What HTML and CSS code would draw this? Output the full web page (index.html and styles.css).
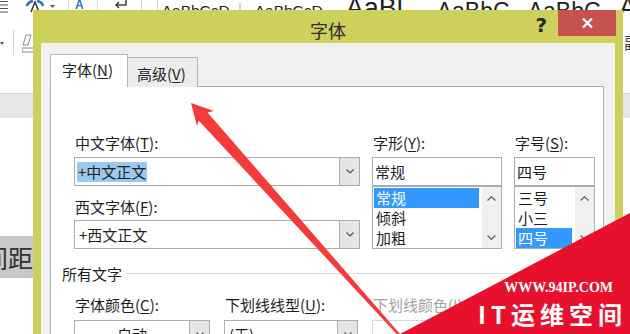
FILE: index.html
```html
<!DOCTYPE html>
<html lang="zh-CN">
  <head>
    <meta charset="UTF-8" />
    <title>字体</title>
    <link rel="stylesheet" href="styles.css">
  </head>
  <body>
    <!-- word window behind the dialog -->
    <div class="word">
      <div class="ribbon">
        <div class="ribbon-row row-top">
          <svg class="list-ico" width="8" height="14" viewBox="0 0 8 14"><path d="M0 1.5H8M0 5H8M0 8.5H8M0 12H8" stroke="#555" stroke-width="1"/></svg>
          <svg class="effect-ico" width="20" height="12" viewBox="0 0 20 12"><path d="M2 6a8 6 0 0 1 6-5M18 6a8 6 0 0 0-6-5" fill="none" stroke="#2f6fbf" stroke-width="2.5"/><path d="M6 12L10 2L14 12" fill="none" stroke="#333" stroke-width="1.5"/></svg>
          <svg class="drop-tri" width="5" height="3" viewBox="0 0 5 3"><path d="M0 0H5L2.5 3Z" fill="#555"/></svg>
          <span class="rsep"></span>
          <span class="blue-a">A</span>
          <span class="rsep"></span>
          <svg class="return-ico" width="14" height="9" viewBox="0 0 14 9"><path d="M12 0V5H2M5 2L2 5L5 8" fill="none" stroke="#444" stroke-width="1.6"/></svg>
          <span class="rsep"></span>
          <div class="gallery">
            <span class="style-item s-small first">AaBbCcD</span>
            <span class="style-item s-small">AaBbCcD</span>
            <span class="style-item s-big">AaBl</span>
            <span class="style-item s-mid">AaBbC</span>
            <span class="style-item s-mid">AaBbC</span>
            <span class="style-item s-big">A</span>
          </div>
        </div>
        <div class="ribbon-row row-second">
          <svg class="small-tri" width="4" height="3" viewBox="0 0 4 3"><path d="M0 0H4L2 3Z" fill="#555"/></svg>
          <span class="rsep tall"></span>
          <svg class="eraser-ico" width="12" height="20" viewBox="0 0 12 20"><path d="M4 2L9 2L6 12L1 12Z" fill="none" stroke="#8a8a8a" stroke-width="1"/><path d="M0 15H12V19H0Z" fill="none" stroke="#8a8a8a" stroke-width="1"/></svg>
          <span class="side-style">副标题</span>
        </div>
      </div>
      <div class="ribbon-foot"></div>
      <div class="doc">
        <p class="doc-line"><span class="hl">间距离</span></p>
      </div>
    </div>

    <!-- font dialog -->
    <div class="dialog">
      <div class="titlebar">
        <div class="title">字体</div>
        <div class="controls">
          <span class="help">?</span>
          <span class="close">
            <svg width="11" height="10" viewBox="0 0 11 10"><path d="M1 0.5L10 9.5M10 0.5L1 9.5" stroke="#fff" stroke-width="2.2"/></svg>
          </span>
        </div>
      </div>

      <div class="client">
        <div class="tabs">
          <div class="tab active">字体(<u>N</u>)</div>
          <div class="tab">高级(<u>V</u>)</div>
        </div>

        <div class="panel">
          <div class="font-grid">
            <div class="col">
              <div class="label">中文字体(<u>T</u>):</div>
              <div class="combo">
                <span class="combo-text"><span class="sel-text">+中文正文</span></span>
                <span class="drop"><svg width="8" height="5" viewBox="0 0 8 5"><path d="M0.5 0.5L4 4L7.5 0.5" fill="none" stroke="#555" stroke-width="1.2"/></svg></span>
              </div>
              <div class="label second">西文字体(<u>F</u>):</div>
              <div class="combo tight">
                <span class="combo-text pad">+西文正文</span>
                <span class="drop"><svg width="8" height="5" viewBox="0 0 8 5"><path d="M0.5 0.5L4 4L7.5 0.5" fill="none" stroke="#555" stroke-width="1.2"/></svg></span>
              </div>
            </div>

            <div class="col">
              <div class="label">字形(<u>Y</u>):</div>
              <div class="textbox">常规</div>
              <div class="listbox">
                <ul class="items">
                  <li class="sel">常规</li>
                  <li>倾斜</li>
                  <li>加粗</li>
                </ul>
                <div class="scroll">
                  <svg width="9" height="5" viewBox="0 0 9 5"><path d="M0.5 4.5L4.5 0.8L8.5 4.5" fill="none" stroke="#606060" stroke-width="1.3"/></svg>
                  <svg width="9" height="5" viewBox="0 0 9 5"><path d="M0.5 0.5L4.5 4.2L8.5 0.5" fill="none" stroke="#606060" stroke-width="1.3"/></svg>
                </div>
              </div>
            </div>

            <div class="col">
              <div class="label">字号(<u>S</u>):</div>
              <div class="textbox">四号</div>
              <div class="listbox">
                <ul class="items">
                  <li>三号</li>
                  <li>小三</li>
                  <li class="sel">四号</li>
                </ul>
                <div class="scroll">
                  <svg width="9" height="5" viewBox="0 0 9 5"><path d="M0.5 4.5L4.5 0.8L8.5 4.5" fill="none" stroke="#606060" stroke-width="1.3"/></svg>
                  <svg width="9" height="5" viewBox="0 0 9 5"><path d="M0.5 0.5L4.5 4.2L8.5 0.5" fill="none" stroke="#606060" stroke-width="1.3"/></svg>
                </div>
              </div>
            </div>
          </div>

          <div class="group-head">所有文字</div>

          <div class="effect-grid">
            <div class="label">字体颜色(<u>C</u>):</div>
            <div class="label">下划线线型(<u>U</u>):</div>
            <div class="label disabled">下划线颜色(<u>I</u>):</div>
            <div class="combo">
              <span class="combo-text center">自动</span>
              <span class="drop"><svg width="8" height="5" viewBox="0 0 8 5"><path d="M0.5 0.5L4 4L7.5 0.5" fill="none" stroke="#555" stroke-width="1.2"/></svg></span>
            </div>
            <div class="combo">
              <span class="combo-text pad">(无)</span>
              <span class="drop"><svg width="8" height="5" viewBox="0 0 8 5"><path d="M0.5 0.5L4 4L7.5 0.5" fill="none" stroke="#555" stroke-width="1.2"/></svg></span>
            </div>
            <div class="combo off"></div>
          </div>
        </div>
      </div>
    </div>

    <!-- red arrow pointing at the tab -->
    <svg class="arrow" width="630" height="334" viewBox="0 0 630 334">
      <polygon points="191,103 214,111 207.5,112.4 410.7,346.3 409.3,347.7 198.6,120.4 197,126" fill="#f33b3b"/>
    </svg>

    <!-- site watermark -->
    <div class="watermark">
      <div class="wm-url">WWW.94IP.COM</div>
      <div class="wm-name">IT运维空间</div>
    </div>
  </body>
</html>
```

FILE: styles.css
```css
* {
  box-sizing: border-box;
}

body {
  margin: 0;
  width: 630px;
  height: 334px;
  overflow: hidden;
  position: relative;
  background: #fff;
  font-family: "Noto Sans CJK SC", "Noto Sans", sans-serif;
  font-size: 15px;
  color: #1e1e1e;
}

u {
  text-decoration-thickness: 1px;
  text-underline-offset: 2px;
}

/* word background */
.word {
  display: flex;
  flex-direction: column;
  height: 334px;
}

.ribbon {
  height: 93px;
  background: #fff;
}

.ribbon-row {
  display: flex;
  align-items: flex-start;
}

.ribbon-row > *,
.gallery > * {
  flex-shrink: 0;
}

.row-top {
  height: 16px;
}

.effect-ico {
  margin-left: 17px;
}

.drop-tri {
  margin: 5px 0 0 5px;
}

.rsep {
  width: 1px;
  height: 16px;
  background: #d6d6d6;
  margin-left: 13px;
}

.blue-a {
  margin-left: 6px;
  font: bold 12px/10px "Liberation Sans", sans-serif;
  color: #2f6fbf;
}

.return-ico {
  margin-left: 16px;
}

.gallery {
  display: flex;
  align-items: flex-start;
  margin-left: 15px;
  border-left: 1px solid #d6d6d6;
  font-family: "Liberation Sans", sans-serif;
  color: #222;
}

.style-item {
  width: 91px;
  padding-left: 5px;
  line-height: 1;
  white-space: nowrap;
}

.style-item.first {
  width: 83px;
  padding-left: 4px;
  border-right: 2px solid #d6d6d6;
  margin-right: 9px;
}

.s-small {
  font-size: 15.5px;
  margin-top: 3px;
}

.s-mid {
  font-size: 23px;
  margin-top: 0;
}

.s-big {
  font-size: 27px;
  margin-top: -5px;
}

.row-second {
  margin-top: 14px;
  height: 25px;
}

.small-tri {
  margin-top: 12px;
}

.rsep.tall {
  height: 25px;
  margin-left: 9px;
}

.eraser-ico {
  margin: 3px 0 0 8px;
}

.side-style {
  margin-left: auto;
  margin-right: -42px;
  margin-top: 2px;
  font-size: 16px;
  line-height: 20px;
  color: #444;
}

.ribbon-foot {
  height: 25px;
  background: #e6e6e6;
  border-top: 1px solid #d8d8d8;
}

.doc {
  flex: 1;
  background: #fff;
  padding-top: 118px;
}

.doc-line {
  margin: 0 0 0 -17px;
  font-size: 25px;
  line-height: 42px;
  color: #333;
  white-space: nowrap;
}

.hl {
  display: inline-block;
  background: #c8c8c8;
  padding-right: 10px;
}

/* dialog window */
.dialog {
  position: absolute;
  left: 33px;
  top: 10px;
  width: 590px;
  height: 340px;
  background: #cdd15c;
  padding: 0 8px;
  display: flex;
  flex-direction: column;
}

.titlebar {
  height: 37px;
  display: grid;
  grid-template-columns: 1fr auto 1fr;
  align-items: start;
}

.title {
  grid-column: 2;
  font-size: 18px;
  line-height: 20px;
  padding-top: 10px;
  color: #2e2e2e;
}

.controls {
  grid-column: 3;
  justify-self: end;
  display: flex;
  align-items: flex-start;
  margin-right: -1px;
}

.help {
  font: bold 20px/20px "DejaVu Sans", sans-serif;
  color: #262626;
  margin: 5px 11px 0 0;
}

.close {
  width: 58px;
  height: 26px;
  background: #c75050;
  display: flex;
  align-items: center;
  justify-content: center;
}

.client {
  flex: 1;
  background: #f0f0f0;
  padding: 11px 11px 0 9px;
  display: flex;
  flex-direction: column;
}

.tabs {
  display: flex;
  align-items: flex-end;
  height: 33px;
  margin-bottom: -1px;
  position: relative;
  z-index: 1;
}

.tab {
  width: 70px;
  height: 30px;
  padding: 6px 0 0 9px;
  line-height: 20px;
  background: #ececec;
  border-top: 1px solid #b4b4b4;
  border-right: 1px solid #b4b4b4;
  color: #222;
}

.tab.active {
  width: 78px;
  height: 33px;
  padding: 5px 0 0 11px;
  background: #fff;
  border: 1px solid #b4b4b4;
  border-bottom: none;
}

.panel {
  flex: 1;
  background: #fff;
  border: 1px solid #adadad;
  padding: 47px 0 0 23px;
}

.font-grid {
  display: grid;
  grid-template-columns: 286px 130px 81px;
  column-gap: 12px;
}

.label {
  line-height: 18px;
  white-space: nowrap;
  margin-bottom: 5px;
  padding-left: 1px;
}

.label.second {
  margin: 12px 0 4px;
}

.label.disabled {
  color: #a3a3a3;
}

.combo {
  height: 29px;
  border: 1px solid #acacac;
  background: #fff;
  display: flex;
}

.combo-text {
  flex: 1;
  display: flex;
  align-items: center;
  padding-left: 2px;
  white-space: nowrap;
}

.combo-text.pad {
  padding-left: 4px;
}

.combo-text.center {
  justify-content: center;
  padding-left: 0;
}

.sel-text {
  display: inline-block;
  line-height: 20px;
  padding: 0 1px;
  background: #99c9ef;
}

.drop {
  width: 20px;
  background: #e5e5e5;
  border-left: 1px solid #acacac;
  display: flex;
  align-items: center;
  justify-content: center;
}

.combo.off {
  border-color: #d9d9d9;
}

.textbox {
  height: 29px;
  border: 1px solid #acacac;
  padding-left: 2px;
  line-height: 27px;
}

.listbox {
  height: 63px;
  border: 1px solid #acacac;
  display: flex;
  background: #fff;
}

.items {
  flex: 1;
  list-style: none;
  margin: 0;
  padding: 1px 3px 0 1px;
}

.items li {
  height: 20px;
  line-height: 20px;
  padding-left: 2px;
}

.items li.sel {
  background: #3399ff;
  color: #fff;
}

.scroll {
  width: 19px;
  background: #f0f0f0;
  display: flex;
  flex-direction: column;
  align-items: center;
  justify-content: space-between;
  padding: 9px 0 8px;
}

.group-head {
  display: flex;
  align-items: center;
  margin: 15px 11px 0 -12px;
  line-height: 19px;
}

.group-head::after {
  content: "";
  flex: 1;
  height: 1px;
  background: #dcdcdc;
  margin-left: 4px;
}

.effect-grid {
  display: grid;
  grid-template-columns: 136px 134px 1fr;
  column-gap: 14px;
  margin: 13px 11px 0 0;
}

.effect-grid .label {
  margin-bottom: 6px;
}

/* overlays */
.arrow {
  position: absolute;
  left: 0;
  top: 0;
  pointer-events: none;
}

.watermark {
  position: absolute;
  right: 0;
  bottom: 0;
  width: 230px;
  height: 121px;
  background: #e8112d;
  clip-path: polygon(100% 0, 100% 100%, 0 100%);
  display: flex;
  flex-direction: column;
  align-items: flex-end;
  justify-content: flex-end;
  padding: 0 3px 6px 0;
  color: #fff;
}

.wm-url {
  font: bold 14px/16px "Liberation Serif", serif;
  margin: 0 14px 4px 0;
}

.wm-name {
  font: bold 24px/28px "Noto Sans CJK SC", sans-serif;
  letter-spacing: 5px;
}
```
